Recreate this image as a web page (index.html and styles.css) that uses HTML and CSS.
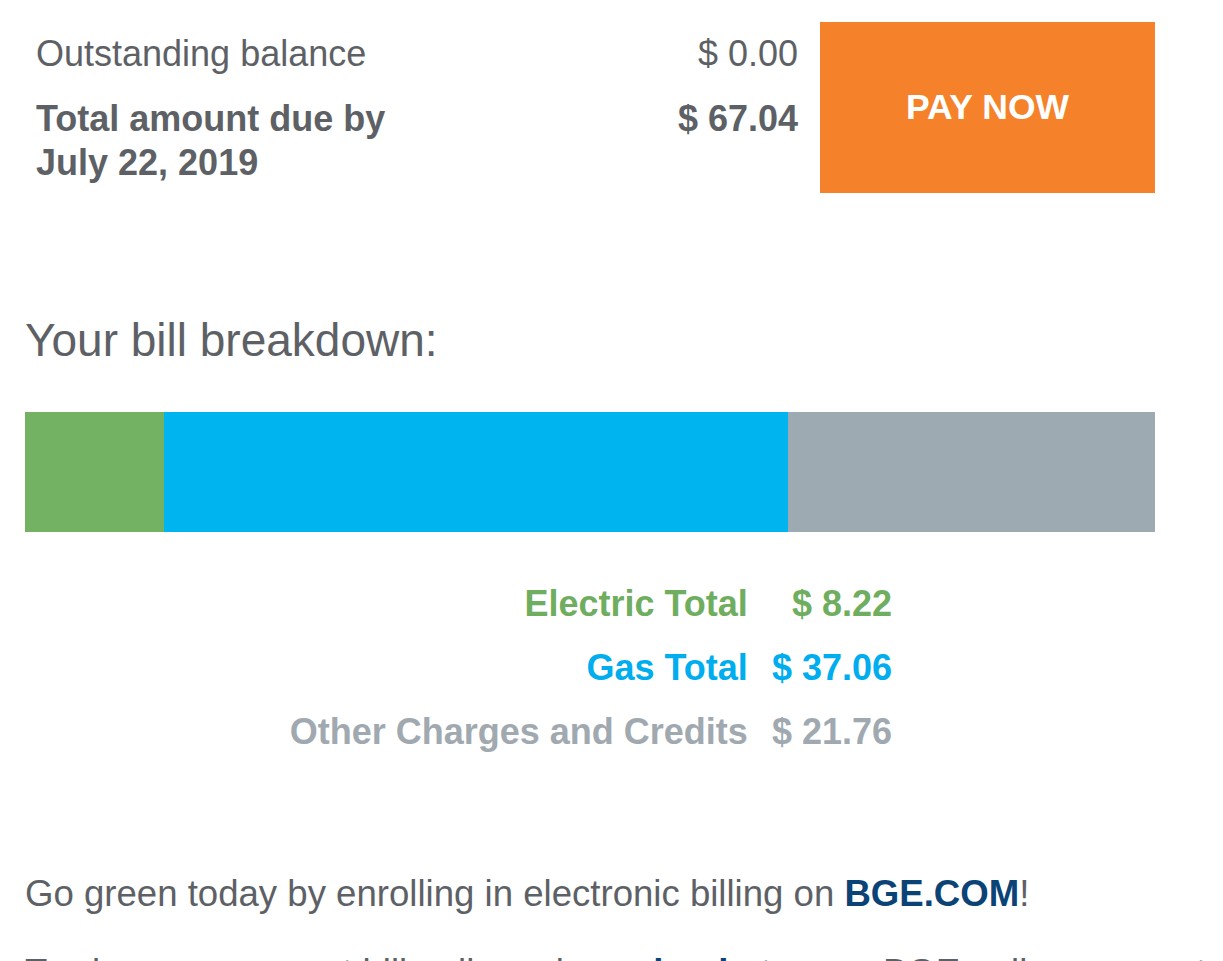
FILE: index.html
```html
<!DOCTYPE html>
<html lang="en">
<head>
<meta charset="utf-8">
<title>Bill summary</title>
<link rel="stylesheet" href="styles.css">
</head>
<body>
<main class="page">
  <section class="summary">
    <div class="summary-table">
      <div class="label">Outstanding balance</div>
      <div class="amount">$ 0.00</div>
      <div class="label strong">Total amount due by<br>July 22, 2019</div>
      <div class="amount strong">$ 67.04</div>
    </div>
    <a class="pay-btn" href="#">PAY NOW</a>
  </section>

  <h2 class="heading">Your bill breakdown:</h2>

  <div class="bar">
    <div class="seg seg-electric" style="flex-grow: 8.22"></div>
    <div class="seg seg-gas" style="flex-grow: 37.06"></div>
    <div class="seg seg-other" style="flex-grow: 21.76"></div>
  </div>

  <div class="legend">
    <div class="leg-label electric">Electric Total</div>
    <div class="leg-amount electric">$ 8.22</div>
    <div class="leg-label gas">Gas Total</div>
    <div class="leg-amount gas">$ 37.06</div>
    <div class="leg-label other">Other Charges and Credits</div>
    <div class="leg-amount other">$ 21.76</div>
  </div>

  <p class="note">Go green today by enrolling in electronic billing on <a class="link" href="#">BGE.COM</a>!</p>
  <p class="note note-2">To view your current bill online, please <a class="link" href="#">log in</a> to your BGE online account.</p>
</main>
</body>
</html>
```

FILE: styles.css
```css
html, body {
  margin: 0;
  padding: 0;
  background: #ffffff;
}

body {
  font-family: "Liberation Sans", Arial, Helvetica, sans-serif;
  color: #5d6166;
}

.page {
  width: 1130px;
  padding: 0 68px 0 25px;
}

.summary {
  display: flex;
  align-items: flex-start;
  gap: 22px;
  padding-top: 22px;
}

.summary-table {
  flex: 1;
  display: grid;
  grid-template-columns: 1fr auto;
  row-gap: 21px;
  padding: 10px 0 0 11px;
  font-size: 36px;
  line-height: 44px;
}

.label {
  font-weight: normal;
}

.amount {
  text-align: right;
}

.strong {
  font-weight: bold;
}

.pay-btn {
  width: 335px;
  height: 171px;
  flex: none;
  display: flex;
  align-items: center;
  justify-content: center;
  background: #f5822a;
  color: #ffffff;
  font-weight: bold;
  font-size: 35.5px;
  text-decoration: none;
}

.heading {
  margin: 121px 0 0 0;
  font-size: 46px;
  line-height: 52px;
  font-weight: normal;
  color: #5d6166;
}

.bar {
  display: flex;
  height: 120px;
  margin-top: 46px;
}

.seg {
  flex-basis: 0;
}

.seg-electric { background: #74b263; }
.seg-gas { background: #00b4f0; }
.seg-other { background: #9eaab2; }

.legend {
  display: grid;
  grid-template-columns: auto auto;
  justify-content: end;
  column-gap: 24px;
  row-gap: 20px;
  margin-top: 50px;
  padding-right: 263px;
  font-size: 36px;
  line-height: 44px;
  font-weight: bold;
}

.leg-label,
.leg-amount {
  text-align: right;
}

.electric { color: #6fad5f; }
.gas { color: #00adee; }
.other { color: #a1a9b0; }

.note {
  margin: 118px 0 0 0;
  font-size: 36.6px;
  line-height: 44px;
  white-space: nowrap;
}

.note-2 {
  margin-top: 35px;
}

.link {
  color: #0b4376;
  font-weight: bold;
  text-decoration: none;
}
```
